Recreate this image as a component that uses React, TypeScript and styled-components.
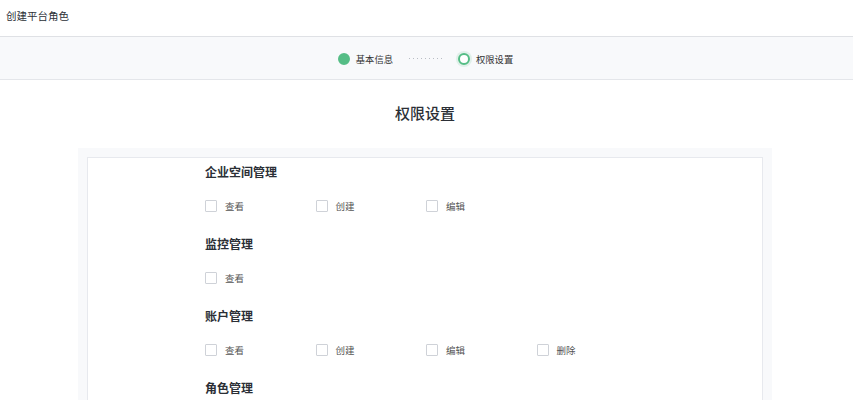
import React from "react";
import styled, { createGlobalStyle } from "styled-components";

const GlobalStyle = createGlobalStyle`
  html, body { margin: 0; padding: 0; background: #fff; }
  body { font-family: "Noto Sans CJK SC", "Noto Sans", sans-serif; color: #333; }
  * { box-sizing: border-box; }
`;

const Page = styled.div`
  width: 853px;
  height: 400px;
  overflow: hidden;
  display: flex;
  flex-direction: column;
`;

const Header = styled.header`
  flex-shrink: 0;
  height: 37px;
  border-bottom: 1px solid #dfe1e5;
  display: flex;
  align-items: center;
  padding: 0 0 6px 6px;
  font-size: 10.5px;
  color: #2b2f36;
`;

const StepsBar = styled.div`
  flex-shrink: 0;
  height: 43px;
  background: #f8f9fb;
  border-bottom: 1px solid #e4e6ea;
  display: flex;
  align-items: center;
  justify-content: center;
  padding-right: 2px;
`;

const Step = styled.div`
  display: flex;
  align-items: center;
  gap: 6px;
  font-size: 9.3px;
  color: #333;
  padding-top: 1px;
`;

const Dot = styled.span<{ $done?: boolean }>`
  width: 12px;
  height: 12px;
  border-radius: 50%;
  background: ${(p) => (p.$done ? "#55bd86" : "#fff")};
  border: 2px solid #55bd86;
  box-shadow: ${(p) => (p.$done ? "none" : "0 0 0 2px rgba(85,189,134,0.15)")};
`;

const Dots = styled.span`
  width: 36px;
  height: 1px;
  background-image: linear-gradient(to right, #b9bdc4 1px, transparent 1px);
  background-size: 4px 1px;
  margin: 0 13px 0 16px;
`;

const Title = styled.h1`
  flex-shrink: 0;
  margin: 20px 0 0;
  height: 26px;
  line-height: 26px;
  text-align: center;
  font-size: 15px;
  font-weight: 500;
  color: #2b2f36;
  padding-right: 3px;
`;

const Panel = styled.div`
  flex: 1;
  min-height: 0;
  margin: 22px 81px 0 78px;
  padding: 9px 9px 0;
  background: #f8f9fb;
  display: flex;
  overflow: hidden;
`;

const Card = styled.div`
  flex: 1;
  background: #fff;
  border: 1px solid #e7e9ee;
  border-bottom: none;
  padding: 5px 0 0 117px;
`;

const Section = styled.section`
  margin-bottom: 20px;
`;

const SectionTitle = styled.h2`
  margin: 0;
  height: 18px;
  line-height: 18px;
  font-size: 12px;
  font-weight: 600;
  color: #2b2f36;
`;

const Options = styled.div`
  margin-top: 16px;
  display: grid;
  grid-template-columns: repeat(4, 110.5px);
  height: 18px;
  align-items: center;
`;

const Option = styled.label`
  display: flex;
  align-items: center;
  gap: 8px;
  font-size: 9.5px;
  color: #555;
`;

const Box = styled.span`
  width: 12px;
  height: 12px;
  border: 1px solid #cfd2d8;
  border-radius: 1px;
  background: #fff;
`;

const sections: { title: string; items: string[] }[] = [
  { title: "企业空间管理", items: ["查看", "创建", "编辑"] },
  { title: "监控管理", items: ["查看"] },
  { title: "账户管理", items: ["查看", "创建", "编辑", "删除"] },
  { title: "角色管理", items: [] },
];

export default function App() {
  return (
    <Page>
      <GlobalStyle />
      <Header>创建平台角色</Header>
      <StepsBar>
        <Step>
          <Dot $done />
          基本信息
        </Step>
        <Dots />
        <Step>
          <Dot />
          权限设置
        </Step>
      </StepsBar>
      <Title>权限设置</Title>
      <Panel>
        <Card>
          {sections.map((s) => (
            <Section key={s.title}>
              <SectionTitle>{s.title}</SectionTitle>
              {s.items.length > 0 && (
                <Options>
                  {s.items.map((it) => (
                    <Option key={it}>
                      <Box />
                      {it}
                    </Option>
                  ))}
                </Options>
              )}
            </Section>
          ))}
        </Card>
      </Panel>
    </Page>
  );
}
